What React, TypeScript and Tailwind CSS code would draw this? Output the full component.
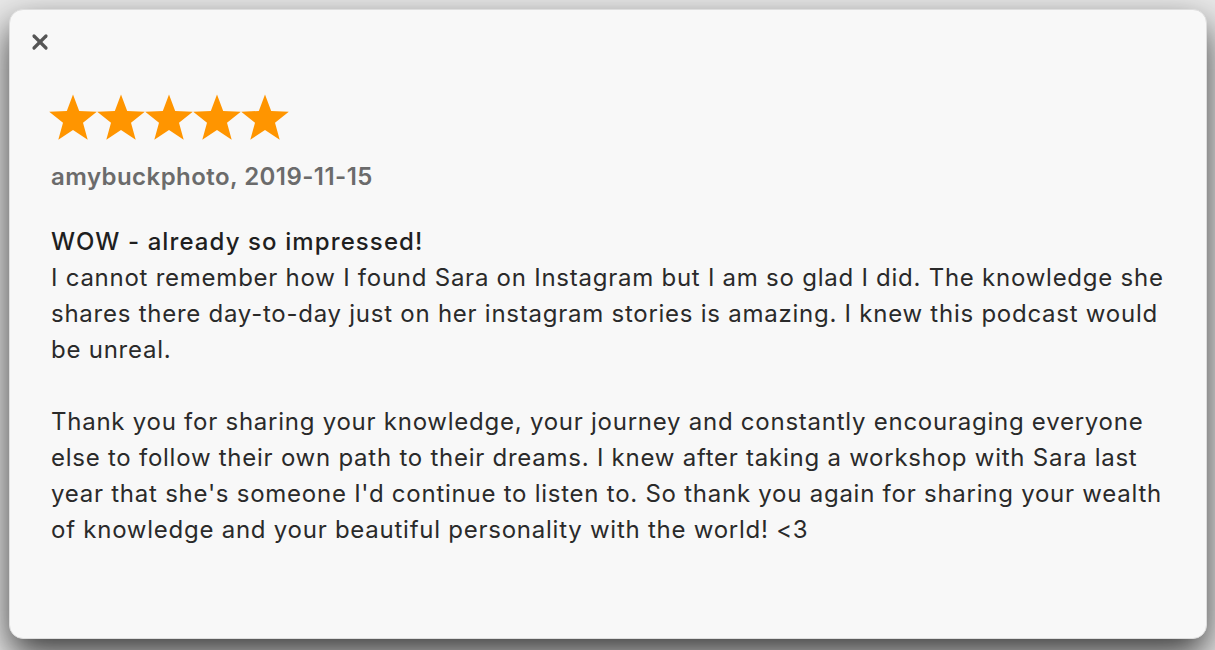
import { X } from 'lucide-react';

const review = {
  author: 'amybuckphoto',
  date: '2019-11-15',
  rating: 5,
  title: 'WOW - already so impressed!',
  body:
    "I cannot remember how I found Sara on Instagram but I am so glad I did. The knowledge she shares there day-to-day just on her instagram stories is amazing. I knew this podcast would be unreal.\n\nThank you for sharing your knowledge, your journey and constantly encouraging everyone else to follow their own path to their dreams. I knew after taking a workshop with Sara last year that she's someone I'd continue to listen to. So thank you again for sharing your wealth of knowledge and your beautiful personality with the world! <3",
};

function Star() {
  return (
    <svg viewBox="0 0 24 24" className="w-[48px] h-[48px]" aria-hidden="true">
      <path
        fill="#ff9500"
        d="M12 1.2l3.09 8.3 8.81.36-6.9 5.5 2.35 8.5L12 19l-7.35 4.86 2.35-8.5-6.9-5.5 8.81-.36z"
      />
    </svg>
  );
}

export default function App() {
  return (
    <div
      className="w-[1215px] h-[650px] overflow-hidden bg-[#e9e9e9] p-[9px] pb-[11px]"
      style={{ fontFamily: 'Inter, "Noto Sans", sans-serif' }}
    >
      {/* Modal */}
      <div className="h-[630px] w-[1198px] rounded-[14px] border border-[#dedede] bg-[#f8f8f8] shadow-[0_16px_36px_rgba(0,0,0,0.75)] flex flex-col">
        <div className="pl-[18px] pt-[20px]">
          <button type="button" aria-label="Close" className="text-[#555] block">
            <X className="w-[24px] h-[24px]" strokeWidth={3.2} />
          </button>
        </div>

        <div className="pl-[41px] pr-[28px] pt-[38px]">
          <div className="flex -ml-[2px]">
            {Array.from({ length: review.rating }).map((_, i) => (
              <Star key={i} />
            ))}
          </div>

          <p className="mt-[23px] text-[24px] leading-[28px] font-semibold text-[#6b6b6b] tracking-[0.45px]">
            {review.author}, {review.date}
          </p>

          <h3 className="mt-[33px] text-[24px] leading-[36px] font-medium text-[#1f1f1f] tracking-[1.1px]">
            {review.title}
          </h3>
          <p className="text-[24px] leading-[36px] text-[#2a2a2a] whitespace-pre-wrap tracking-[0.75px]">
            {review.body}
          </p>
        </div>
      </div>
    </div>
  );
}
